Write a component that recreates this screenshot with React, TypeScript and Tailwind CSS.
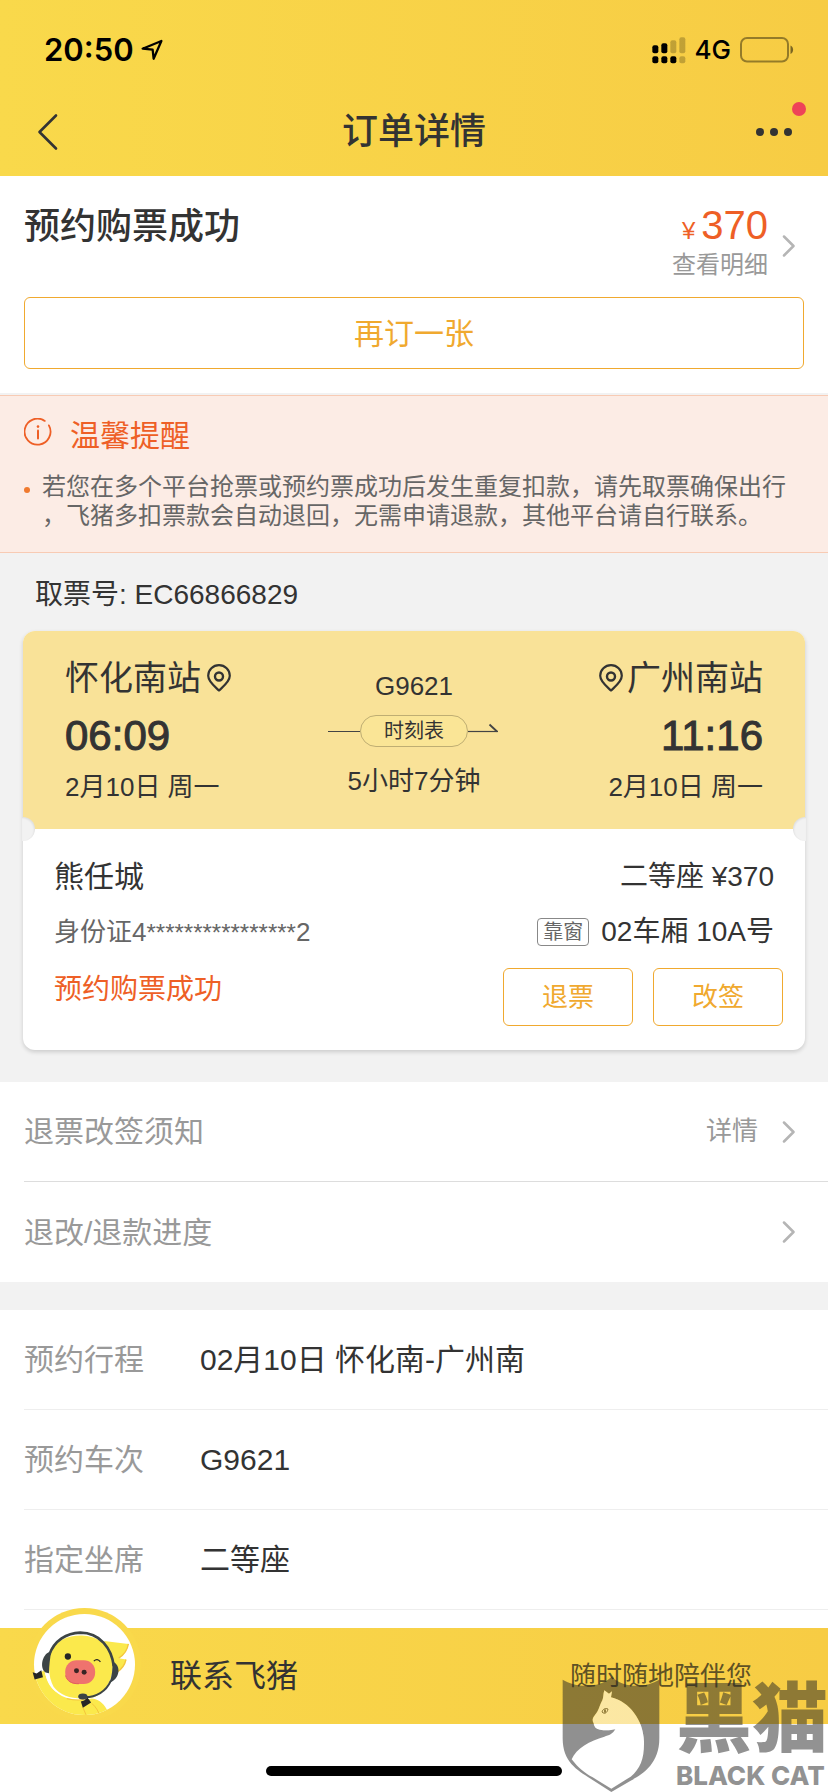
import React from 'react';

const INFO_ROWS = [
  { label: '预约行程', value: '02月10日 怀化南-广州南' },
  { label: '预约车次', value: 'G9621' },
  { label: '指定坐席', value: '二等座' },
];

const ChevronRight = ({ className = '' }: { className?: string }) => (
  <svg className={`shrink-0 ${className}`} width="14" height="22" viewBox="0 0 14 22" fill="none" aria-hidden="true">
    <path d="M2 1.5 L11.5 11 L2 20.5" stroke="#b5b5b5" strokeWidth="2.5" strokeLinecap="round" strokeLinejoin="round" />
  </svg>
);

const PinIcon = () => (
  <svg className="shrink-0" width="24" height="28" viewBox="0 0 24 28" fill="none" stroke="#333" aria-hidden="true">
    <path d="M12 26.5 C9 23.5 1.2 18 1.2 11.8 A10.8 10.6 0 0 1 22.8 11.8 C22.8 18 15 23.5 12 26.5 Z" strokeWidth="2.2" strokeLinejoin="round" />
    <circle cx="12" cy="12.5" r="4" strokeWidth="2.4" />
  </svg>
);

const StatusBar = () => (
  <div className="flex h-[88px] items-center justify-between pt-3 pl-11 pr-[34px] font-['Inter','Noto_Sans_CJK_SC',sans-serif] text-black">
    <div className="flex items-center gap-[7px]">
      <span className="text-[31px] leading-10 font-semibold">20:50</span>
      <svg width="22" height="22" viewBox="421 116 68 68" fill="none" aria-hidden="true">
        <path d="M426 146 L484 122 L460 177 L457 149 Z" stroke="#000" strokeWidth="7" strokeLinejoin="round" />
      </svg>
    </div>
    <div className="flex items-center gap-[9px]">
      <svg width="34" height="27" viewBox="716 104 102 81" aria-hidden="true">
        <rect x="717" y="129" width="18" height="24" rx="6" />
        <rect x="744" y="123" width="18" height="30" rx="6" />
        <rect x="771" y="114" width="18" height="39" rx="6" fillOpacity="0.22" />
        <rect x="798" y="105" width="18" height="48" rx="6" fillOpacity="0.22" />
        <rect x="717" y="162" width="18" height="21" rx="6" />
        <rect x="744" y="162" width="18" height="21" rx="6" />
        <rect x="771" y="162" width="18" height="21" rx="6" />
        <rect x="798" y="162" width="18" height="21" rx="6" fillOpacity="0.22" />
      </svg>
      <span className="text-[26px] leading-8 font-medium">4G</span>
      <svg width="54" height="26" viewBox="0 0 54 26" fill="none" aria-hidden="true">
        <rect x="1" y="1" width="47" height="23.5" rx="6" stroke="#000" strokeOpacity="0.4" strokeWidth="2" />
        <path d="M50.5 8.5 C54 10 54 15.5 50.5 17 Z" fill="#000" fillOpacity="0.5" />
      </svg>
    </div>
  </div>
);

const NavBar = () => (
  <div className="grid h-[88px] grid-cols-[1fr_auto_1fr] items-center text-[#333]">
    <button type="button" aria-label="返回" className="ml-9 justify-self-start">
      <svg width="24" height="38" viewBox="0 0 24 38" fill="none">
        <path d="M20 2.5 L3.5 19 L20 35.5" stroke="#333" strokeWidth="2.6" strokeLinecap="round" strokeLinejoin="round" />
      </svg>
    </button>
    <h1 className="text-4xl font-medium">订单详情</h1>
    <button type="button" aria-label="更多" className="relative mr-9 flex gap-1.5 justify-self-end">
      <span className="size-2 rounded-full bg-[#333]" />
      <span className="size-2 rounded-full bg-[#333]" />
      <span className="size-2 rounded-full bg-[#333]" />
      <span className="absolute -top-[26px] -right-3.5 size-3.5 rounded-full bg-[#ee4358]" />
    </button>
  </div>
);

const Summary = () => (
  <section className="border-b-2 border-[#f2f2f2] bg-white px-6 pt-[25px] pb-6">
    <div className="flex items-start justify-between">
      <h2 className="text-4xl leading-[52px] font-medium text-[#333]">预约购票成功</h2>
      <button type="button" className="mr-2 flex text-right">
        <span className="block">
          <span className="flex h-12 items-baseline justify-end gap-1.5 leading-12 text-[#ee5f26]">
            <span className="text-2xl">¥</span>
            <span className="text-[40px] leading-12">370</span>
          </span>
          <span className="block text-2xl leading-8 text-[#999]">查看明细</span>
        </span>
        <ChevronRight className="mb-6 ml-3.5 self-end" />
      </button>
    </div>
    <button type="button" className="mt-4 block h-[72px] w-full rounded-md border border-[#f0a92f] text-[30px] text-[#f0a92f]">
      再订一张
    </button>
  </section>
);

const Notice = () => (
  <section className="border-y border-[#f8cbb4] bg-[#fcece5] px-6 pt-5 pb-[22px]">
    <div className="flex items-center gap-[18px]">
      <svg className="mb-2 shrink-0" width="28" height="28" viewBox="0 0 28 28" fill="none" stroke="#ee5f26" strokeLinecap="round" aria-hidden="true">
        <path d="M24.9 7.4 A13 13 0 1 1 20.8 2.9" strokeWidth="1.8" />
        <path d="M14 12.5 V20.5" strokeWidth="2" />
        <circle cx="14" cy="8.6" r="1.3" fill="#ee5f26" stroke="none" />
      </svg>
      <h3 className="text-[30px] leading-10 text-[#ee5f26]">温馨提醒</h3>
    </div>
    <div className="mt-4 flex gap-3">
      <span className="mt-[15px] size-1.5 shrink-0 rounded-full bg-[#f07a2f]" />
      <p className="text-2xl leading-[29px] text-[#666]">
        若您在多个平台抢票或预约票成功后发生重复扣款，请先取票确保出行
        <br />
        ，飞猪多扣票款会自动退回，无需申请退款，其他平台请自行联系。
      </p>
    </div>
  </section>
);

interface StopProps {
  station: string;
  time: string;
  date: string;
  end?: boolean;
}

const Stop = ({ station, time, date, end }: StopProps) => (
  <div className={`flex flex-col ${end ? 'items-end' : 'items-start'}`}>
    <button type="button" className={`flex items-center text-[34px] leading-10 ${end ? 'flex-row-reverse gap-1' : 'gap-1.5'}`}>
      <span>{station}</span>
      <PinIcon />
    </button>
    <div className="mt-3.5 text-[42px] leading-12 [-webkit-text-stroke:1px_#333]">{time}</div>
    <div className="mt-[11px] text-[26px] leading-8">{date}</div>
  </div>
);

const Ticket = () => (
  <div className="rounded-xl bg-white shadow-[0_2px_4px_rgba(0,0,0,0.16)]">
    <div className="relative grid grid-cols-[1fr_auto_1fr] rounded-t-xl bg-[#f9e298] px-[42px] pt-[27px] pb-[26px] text-[#333]">
      <Stop station="怀化南站" time="06:09" date="2月10日 周一" />
      <div className="flex flex-col items-center pt-3 text-[26px] leading-8">
        <div>G9621</div>
        <div className="mt-[13px] flex items-center">
          <span className="h-px w-8 bg-[#444]" />
          <button type="button" className="h-8 w-[108px] rounded-full border border-[#bfae73] bg-[#fae596] text-xl leading-7">
            时刻表
          </button>
          <svg width="32" height="18" viewBox="0 0 32 18" fill="none" stroke="#444" aria-hidden="true">
            <path d="M0 9.5 H30" strokeWidth="1.2" />
            <path d="M21.5 2.5 L29 9.5" strokeWidth="1.8" />
          </svg>
        </div>
        <div className="mt-[18px]">5小时7分钟</div>
      </div>
      <Stop station="广州南站" time="11:16" date="2月10日 周一" end />
      {/* punched notches on both edges */}
      <span className="absolute -bottom-3 -left-px h-6 w-[13px] rounded-r-full bg-[#f2f2f2] shadow-[inset_-1px_1px_2px_rgba(0,0,0,0.08)]" />
      <span className="absolute -right-px -bottom-3 h-6 w-[13px] rounded-l-full bg-[#f2f2f2] shadow-[inset_1px_1px_2px_rgba(0,0,0,0.08)]" />
    </div>
    <div className="pt-7 pr-[22px] pb-6 pl-[31px] text-[28px] text-[#333]">
      <div className="mr-[9px] flex justify-between leading-10">
        <span className="text-[30px]">熊任城</span>
        <span>二等座 ¥370</span>
      </div>
      <div className="mt-[19px] mr-[9px] flex h-8 items-center justify-between leading-8">
        <span className="text-[26px] text-[#666]">
          身份证4<span className="text-2xl leading-8">****************</span>2
        </span>
        <span className="flex items-center gap-3">
          <span className="h-7 rounded-sm border border-[#888] px-[5px] text-xl leading-[26px] text-[#666]">靠窗</span>
          <span>02车厢 10A号</span>
        </span>
      </div>
      <div className="mt-5 flex items-start justify-between">
        <span className="leading-11 text-[#ee5f26]">预约购票成功</span>
        <div className="flex gap-5">
          {['退票', '改签'].map((action) => (
            <button key={action} type="button" className="h-[58px] w-[130px] rounded-md border border-[#f0a92f] text-[26px] text-[#f0a92f]">
              {action}
            </button>
          ))}
        </div>
      </div>
    </div>
  </div>
);

const PigAvatar = () => (
  <svg className="absolute -top-5 left-7" width="113" height="113" viewBox="83 53 340 340" aria-hidden="true">
    <defs>
      <clipPath id="avatar-clip">
        <circle cx="253" cy="223" r="152" />
      </clipPath>
    </defs>
    <circle cx="253" cy="223" r="170" fill="#f9d94b" />
    <circle cx="253" cy="223" r="152" fill="#fff" />
    <g clipPath="url(#avatar-clip)">
      <path d="M95 262 L132 240 C140 275 155 300 185 318 C215 332 250 330 275 325 C300 328 315 345 322 362 L300 400 L150 400 Z" fill="#fbe94c" />
      <path d="M133 240 C138 275 152 296 172 308 C158 288 150 268 147 244 Z" fill="#fff" />
      <path d="M200 326 C225 332 245 330 262 326 M248 352 L260 380 M275 340 C288 352 294 362 298 375" fill="none" stroke="#f2bd3a" strokeWidth="2.5" />
    </g>
    <path d="M312 152 L385 161 C382 180 372 194 356 204 L378 208 C374 226 364 238 350 247 L335 225 Z" fill="#fbe94c" />
    <path d="M385 161 C382 180 372 194 356 204 M378 208 C374 226 364 238 350 247" fill="none" stroke="#f4c63c" strokeWidth="4" />
    <path d="M152 185 C165 150 205 135 245 136 C290 138 325 160 336 200 C346 250 325 300 285 320 C240 332 185 325 160 290 C143 260 143 215 152 185 Z" fill="#fbe94c" />
    <path d="M147 194 C162 150 200 128 240 127 C300 127 335 175 341 228" fill="none" stroke="#3c4446" strokeWidth="8" />
    <path d="M153 184 C128 186 115 232 136 247 L146 249 C147 225 149 205 153 184 Z" fill="#3c4446" />
    <path d="M337 214 C365 224 360 268 328 278 C336 258 338 236 337 214 Z" fill="#3c4446" />
    <path d="M332 272 C318 304 288 322 252 321" fill="none" stroke="#3c4446" strokeWidth="6" />
    <ellipse cx="248" cy="319" rx="14" ry="9" fill="#3c4446" />
    <path d="M242 334 L252 331 L262 322 L273 337 L248 353 Z" fill="#262626" />
    <path d="M97 246 L109 250 L123 240 L128 261 L103 268 Z" fill="#262626" />
    <rect x="195" y="210" width="90" height="72" rx="34" fill="#ef736e" />
    <path d="M196 256 C200 273 214 281 236 281" fill="none" stroke="#e0605c" strokeWidth="3" />
    <circle cx="229" cy="242" r="7.5" fill="#3a2424" />
    <circle cx="252" cy="246" r="7.5" fill="#3a2424" />
    <circle cx="203" cy="199" r="9.5" fill="#262626" />
    <path d="M281 213 Q291 203 301 215" fill="none" stroke="#262626" strokeWidth="3.5" />
  </svg>
);

const BlackCatMark = () => (
  <div className="pointer-events-none absolute right-0 bottom-0 flex items-start gap-4 text-[#252525]/50">
    <svg width="98" height="116" viewBox="56 138 294 348" aria-hidden="true">
      <path
        fill="#252525"
        fillOpacity="0.51"
        fillRule="evenodd"
        d="M58 149 C95 172 165 178 205 140 C245 178 310 172 348 149 V325 C348 400 300 432 262 452 L204 486 L142 446 C100 420 58 395 58 325 Z
           M183 181 C179 192 181 203 177 211 C168 228 166 243 155 255 C147 264 146 272 151 280 C153 292 158 297 170 299 C190 303 203 300 216 298 C208 312 197 316 183 320 C140 332 98 355 85 388 C105 414 125 430 148 442 L204 476 L262 440 C292 415 303 385 302 335 C300 270 258 215 203 202 L206 184 L197 191 Z"
      />
      <path
        fill="#fff"
        fillOpacity="0.5"
        d="M183 181 C179 192 181 203 177 211 C168 228 166 243 155 255 C147 264 146 272 151 280 C153 292 158 297 170 299 C190 303 203 300 216 298 L302 335 C300 270 258 215 203 202 L206 184 L197 191 Z"
      />
      <path d="M176 246 C179 236 186 234 194 237 C192 248 184 254 176 246 Z" fill="none" stroke="#8d7735" strokeWidth="3" />
      <ellipse cx="185" cy="243" rx="3" ry="6" fill="#8d7735" />
    </svg>
    <div className="flex flex-col">
      <span className="text-[76px] leading-[88px] font-black">黑猫</span>
      <span className="font-['Inter',sans-serif] text-[26px] leading-6 font-extrabold">BLACK CAT</span>
    </div>
  </div>
);

export default function App() {
  return (
    <div className="relative bg-white font-['Liberation_Sans','Noto_Sans_CJK_SC',sans-serif] text-[#333]">
      <header className="bg-linear-to-r from-[#f9d94b] to-[#f7cc44]">
        <StatusBar />
        <NavBar />
      </header>

      <main>
        <Summary />
        <Notice />

        <section className="bg-[#f2f2f2] px-[23px] pt-[22px] pb-8">
          <p className="mb-4 ml-3 text-[28px] leading-10">取票号: EC66866829</p>
          <Ticket />
        </section>

        <section className="bg-white text-[30px] text-[#999]">
          <button type="button" className="flex w-full pl-6 text-left">
            <span className="flex h-[100px] flex-1 items-center justify-between border-b border-[#ddd] pr-8">
              <span>退票改签须知</span>
              <span className="flex items-center gap-6 text-[26px]">
                详情
                <ChevronRight />
              </span>
            </span>
          </button>
          <button type="button" className="flex h-[100px] w-full items-center justify-between pr-8 pl-6 text-left">
            <span>退改/退款进度</span>
            <ChevronRight />
          </button>
        </section>

        <dl className="border-t-28 border-[#f2f2f2] pb-[18px] pl-6 text-[30px]">
          {INFO_ROWS.map((row) => (
            <div key={row.label} className="flex h-[100px] items-center border-b border-[#eee]">
              <dt className="w-44 text-[#999]">{row.label}</dt>
              <dd>{row.value}</dd>
            </div>
          ))}
        </dl>
      </main>

      <footer>
        <a href="#contact" className="relative flex h-24 items-center justify-between bg-linear-to-r from-[#f9d94b] to-[#f7cc44] pr-[76px] pl-[170px]">
          <PigAvatar />
          <span className="text-[32px]">联系飞猪</span>
          <span className="text-[26px] text-[#5f5224]">随时随地陪伴您</span>
        </a>
        <div className="flex justify-center pt-[42px] pb-4">
          <span className="h-2.5 w-[296px] rounded-full bg-black" />
        </div>
      </footer>

      <BlackCatMark />
    </div>
  );
}
